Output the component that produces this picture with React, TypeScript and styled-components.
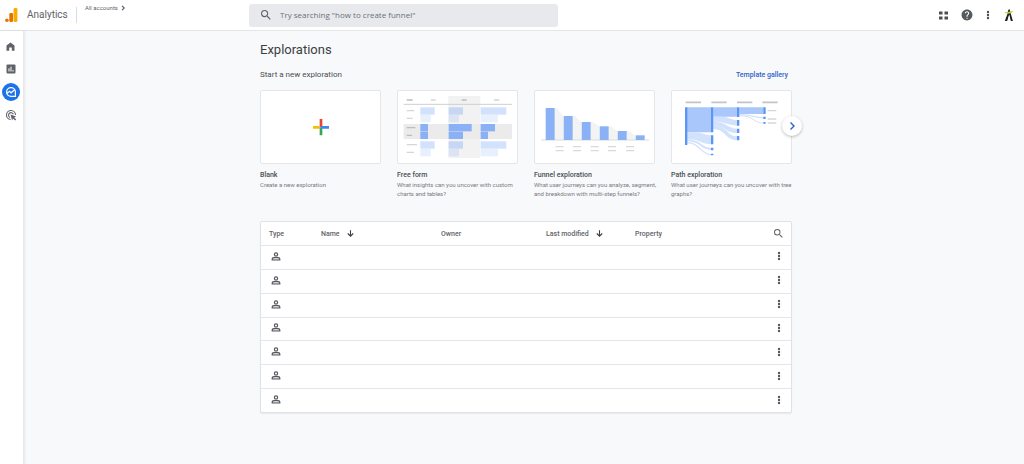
import React from "react";
import styled, { createGlobalStyle } from "styled-components";

const Global = createGlobalStyle`
  * { box-sizing: border-box; }
  html, body, #root { min-height: 100vh; }
  body { margin: 0; background: #f8f9fb; color: #3c4043; font-family: Roboto, sans-serif; font-size: 7px; }
  #root { display: flex; flex-direction: column; }
  button { border: 0; padding: 0; background: none; color: inherit; font: inherit; cursor: pointer; }
  h1, h2, h3, p { margin: 0; font-weight: 400; }
  svg { display: block; }
`;

const Header = styled.header`
  display: grid;
  grid-template-columns: 249px minmax(0, 309px) 1fr;
  align-items: center;
  height: 31px;
  background: #fff;
  border-bottom: 1px solid #e3e5e8;
`;

const Brand = styled.div`
  display: flex;
  align-items: center;
  height: 30px;
  padding-left: 5px;
`;

const BrandName = styled.span`
  width: 50px;
  height: 16px;
  margin-left: 9px;
  border-right: 1px solid #dadce0;
  color: #5f6368;
  font-size: 10px;
  line-height: 16px;
`;

const Account = styled.button`
  display: flex;
  align-items: center;
  align-self: flex-start;
  gap: 2px;
  margin: 4px 0 0 8px;
  color: #5f6368;
  font-size: 6px;
  line-height: 8px;
`;

const SearchBox = styled.label`
  display: flex;
  align-items: center;
  gap: 9px;
  height: 23px;
  padding-left: 12px;
  border-radius: 3px;
  background: #e8e9ed;
  color: #5f6368;
`;

const SearchInput = styled.input`
  flex: 1;
  min-width: 0;
  border: 0;
  padding: 0;
  outline: 0;
  background: transparent;
  color: #5f6368;
  font: 8px/12px "Open Sans", sans-serif;
  &::placeholder { color: #6c7075; opacity: 1; }
`;

const HeaderTools = styled.div`
  display: flex;
  justify-content: flex-end;
  align-items: center;
  gap: 13px;
  padding-right: 9px;
  color: #4b4f54;
`;

const ToolButton = styled.button`
  display: flex;
  align-items: center;
  justify-content: center;
`;

const Body = styled.div`
  display: flex;
  flex: 1;
`;

const Sidebar = styled.nav`
  display: flex;
  flex-direction: column;
  align-items: center;
  gap: 5px;
  flex: none;
  width: 24px;
  padding: 6px 2px 0 0;
  background: #fff;
  border-right: 1px solid #e6e8eb;
  box-shadow: 1px 0 2px rgba(60, 64, 67, 0.1);
`;

const NavLink = styled.a<{ $active?: boolean }>`
  display: flex;
  align-items: center;
  justify-content: center;
  width: 18px;
  height: 18px;
  border-radius: 50%;
  background: ${(p) => (p.$active ? "#1a73e8" : "transparent")};
  color: ${(p) => (p.$active ? "#fff" : "#5f6368")};
`;

const Main = styled.main`
  flex: 1;
  min-width: 0;
  padding: 9px 0 24px 4px;
`;

const Content = styled.div`
  width: 100%;
  max-width: 532px;
  margin: 0 auto;
`;

const Title = styled.h1`
  color: #3c4043;
  font-size: 13px;
  line-height: 20px;
`;

const SectionHead = styled.div`
  display: flex;
  justify-content: space-between;
  align-items: center;
  margin-top: 9px;
  padding-right: 4px;
  line-height: 12px;
`;

const SectionTitle = styled.h2`
  color: #4a4e52;
  font-size: 8px;
`;

const GalleryLink = styled.a`
  color: #2f62c9;
  font-size: 7px;
  font-weight: 500;
  text-decoration: none;
`;

const Templates = styled.div`
  position: relative;
  display: grid;
  grid-template-columns: repeat(4, minmax(0, 1fr));
  gap: 16px;
  margin-top: 9px;
`;

const Template = styled.button`
  display: block;
  align-self: start;
  text-align: left;
`;

const Thumb = styled.div`
  border: 1px solid #e4e6e9;
  border-radius: 2px;
  background: #fff;
  overflow: hidden;
  svg { width: 100%; height: 72px; }
`;

const TemplateName = styled.h3`
  margin-top: 6px;
  color: #4a4e52;
  font-size: 7px;
  font-weight: 500;
  line-height: 10px;
`;

const TemplateText = styled.p`
  color: #777b80;
  font-size: 6px;
  line-height: 9px;
  white-space: pre;
`;

const NextButton = styled.button`
  position: absolute;
  top: 26px;
  right: -10px;
  display: flex;
  align-items: center;
  justify-content: center;
  width: 20px;
  height: 20px;
  border-radius: 50%;
  background: #fff;
  color: #2f62c9;
  box-shadow: 0 1px 3px rgba(60, 64, 67, 0.35);
`;

const TableCard = styled.div`
  margin-top: 23px;
  border: 1px solid #e0e2e5;
  border-radius: 2px;
  background: #fff;
  box-shadow: 0 1px 1px rgba(60, 64, 67, 0.08);
`;

const Table = styled.table`
  width: 100%;
  height: 190px;
  table-layout: fixed;
  border-collapse: separate;
  border-spacing: 0;
`;

const HeadCell = styled.th<{ $width?: number }>`
  width: ${(p) => (p.$width ? `${p.$width}px` : "auto")};
  height: 23px;
  padding: 0 0 0 8px;
  color: #5f6368;
  font-size: 7px;
  font-weight: 500;
  text-align: left;
  vertical-align: middle;
`;

const SortButton = styled.button`
  display: flex;
  align-items: center;
  gap: 7px;
`;

const Cell = styled.td`
  height: 23px;
  padding: 0 0 2px 10px;
  border-top: 1px solid #e4e6e9;
  color: #55595e;
  vertical-align: middle;
`;

const RowAction = styled.button`
  display: flex;
  justify-content: center;
  width: 12px;
  margin: 0 6px 0 auto;
`;

const TableSearch = styled(RowAction)`
  margin-right: 7px;
`;

const Search = ({ size = 12 }: { size?: number }) => (
  <svg width={size} height={size} viewBox="3 3 18 18" fill="currentColor">
    <path d="M15.5 14h-.79l-.28-.27A6.47 6.47 0 0 0 16 9.5 6.5 6.5 0 1 0 9.500 16c1.610 0 3.090-.59 4.230-1.570l.27.28v.79l5 4.990L20.490 19l-4.990-5zm-6 0C7.010 14 5 11.990 5 9.500S7.010 5 9.500 5 14 7.010 14 9.500 11.990 14 9.500 14z" />
  </svg>
);

const Dots = () => (
  <svg width="4" height="10" viewBox="0 0 4 10" fill="currentColor">
    <circle cx="2" cy="2" r="1.200" />
    <circle cx="2" cy="5" r="1.200" />
    <circle cx="2" cy="8" r="1.200" />
  </svg>
);

const Chevron = ({ size, weight }: { size: number; weight: number }) => (
  <svg width={size} height={size} viewBox="0 0 10 10" fill="none" stroke="currentColor" strokeWidth={weight}>
    <path d="M3.500 1.500 7 5 3.500 8.500" />
  </svg>
);

const SortArrow = () => (
  <svg width="7" height="7" viewBox="0 0 7 7" fill="none" stroke="#3c4043" strokeWidth="1.100">
    <path d="M3.500 .3V6.200M.8 3.500l2.700 2.700 2.700-2.700" />
  </svg>
);

const Person = () => (
  <svg width="10" height="9" viewBox="0 0 10 9" fill="none" stroke="currentColor" strokeWidth="1.200">
    <circle cx="5" cy="2.400" r="1.600" />
    <path d="M1.200 8V7.200C1.200 6 3.300 5.400 5 5.400S8.800 6 8.800 7.200V8Z" fill="#dcdddf" />
  </svg>
);

const Logo = () => (
  <svg width="13" height="16" viewBox="0 0 13 16">
    <rect x="8.600" y="1" width="3.800" height="14" rx="1.300" fill="#f9ab00" />
    <rect x="4.300" y="6" width="3.800" height="9" rx="1.300" fill="#e37400" />
    <circle cx="1.900" cy="13.200" r="1.800" fill="#e37400" />
  </svg>
);

const Apps = () => (
  <svg width="9" height="9" viewBox="0 0 9 9" fill="currentColor">
    <path d="M0 .5h3.500v3H0zM5.500 .5H9v3H5.500zM0 5.500h3.500v3H0zM5.500 5.500H9v3H5.500z" />
  </svg>
);

const Help = () => (
  <svg width="12" height="12" viewBox="1 1 22 22" fill="#55595e">
    <path d="M12 2C6.480 2 2 6.480 2 12s4.480 10 10 10 10-4.480 10-10S17.520 2 12 2zm1 17h-2v-2h2v2zm2.070-7.750-.9.920C13.450 12.900 13 13.500 13 15h-2v-.5c0-1.100.45-2.100 1.170-2.830l1.240-1.260c.37-.36.590-.86.590-1.410 0-1.100-.9-2-2-2s-2 .9-2 2H8c0-2.210 1.790-4 4-4s4 1.790 4 4c0 .88-.36 1.680-.93 2.250z" />
  </svg>
);

const Avatar = () => (
  <svg width="12" height="14" viewBox="0 0 12 14">
    <path d="M5 2.800 6.200.8 7 2.800 8.200 7l1.700 6H7.800L6.300 7 4.200 13H1.800L4.400 6z" fill="#202124" />
    <path d="M1.200 4.200 4.500 4 10.500 3 8 5.200 4.200 5.800z" fill="#b5d334" />
    <path d="M6.100 6.500 4.600 13h2.600z" fill="#fff" />
  </svg>
);

const Home = () => (
  <svg width="9" height="9" viewBox="0 0 9 9">
    <path d="M.5 3.400 4.500 .4l4 3V8.700H5.800V5.500H3.200V8.700H.5z" fill="currentColor" />
  </svg>
);

const Reports = () => (
  <svg width="10" height="10" viewBox="0 0 10 10">
    <rect x=".5" y=".5" width="9" height="9" rx="1" fill="currentColor" />
    <path d="M3 7.500V4.300M5 7.500V2.700M7 7.500V6" stroke="#fff" />
  </svg>
);

const Explore = () => (
  <svg width="12" height="12" viewBox="0 0 12 12" fill="none" stroke="currentColor" strokeWidth="1.200">
    <path d="M10.400 10.400H6A4.400 4.400 0 1 1 10.400 6Z" />
    <path d="M2 7.200 4.600 5.200 6 6.800 9.600 3.800" />
  </svg>
);

const Advertising = () => (
  <svg width="12" height="12" viewBox="0 0 12 12" fill="none" stroke="currentColor" strokeWidth="1.100">
    <path d="M5.600 10.500A4.500 4.500 0 1 1 10.500 6" />
    <path d="M5 8.400A2.500 2.500 0 1 1 8.400 5.300" />
    <path d="m5.500 5.500 5.700 1.900-2 1 2 2.200-1 1-2.200-2-.9 1.800z" fill="currentColor" stroke="none" />
  </svg>
);

const BlankArt = () => (
  <svg viewBox="33 18 357 216">
    <path d="M209 102h8v24h-8z" fill="#ea4335" />
    <path d="M189 123h20v8h-20z" fill="#fbbc04" />
    <path d="M209 127h8v24h-8z" fill="#34a853" />
    <path d="M213 123h24v8h-24z" fill="#4285f4" />
  </svg>
);

const freeRows = [
  { y: 67, tones: ["#d2e1fc", "#c6d6f3", "#d2e1fc"], widths: [43, 43, 77] },
  { y: 90, tones: ["#e8f0fe", "#dce4f3", "#e8f0fe"], widths: [31, 31, 52] },
  { y: 117, tones: ["#8ab0f5", "#8ab0f5", "#8ab0f5"], widths: [23, 69, 43] },
  { y: 140, tones: ["#8ab0f5", "#8ab0f5", "#8ab0f5"], widths: [23, 43, 22] },
  { y: 169, tones: ["#d2e1fc", "#c6d6f3", "#d2e1fc"], widths: [43, 43, 77] },
  { y: 192, tones: ["#e8f0fe", "#dce4f3", "#e8f0fe"], widths: [31, 31, 52] },
];

const FreeFormArt = () => (
  <svg viewBox="24 18 357 216">
    <path d="M175 33h96v186h-96z" fill="#f2f2f2" />
    <path d="M41 117h325v45H41z" fill="#ebebeb" />
    <path d="M41 58h325" stroke="#cfcfcf" strokeWidth="3" />
    <path d="M50 45h18M215 45h15M50 128h26M50 151h16" stroke="#bdbdbd" strokeWidth="4" />
    <path d="M123 45h14M312 45h16M50 77h23M50 100h18M50 179h31M50 202h22" stroke="#d6d6d6" strokeWidth="4" />
    {freeRows.map((row) =>
      [91, 176, 272].map((x, i) => (
        <rect key={`${row.y}-${x}`} x={x} y={row.y} width={row.widths[i]} height="22" fill={row.tones[i]} />
      ))
    )}
  </svg>
);

const funnelTops = [69, 93, 111, 124, 138, 151];

const FunnelArt = () => (
  <svg viewBox="30 18 357 216">
    {funnelTops.slice(0, 5).map((top, i) => (
      <path key={top} d={`M${89 + i * 54} ${top}h7l18 ${funnelTops[i + 1] - top}V165h-25z`} fill="#f3f3f3" />
    ))}
    <path d="M48 165h324" stroke="#dcdcdc" strokeWidth="3" />
    {funnelTops.map((top, i) => (
      <rect key={top} x={62 + i * 54} y={top} width="27" height={165 - top} fill="#8ab0f5" />
    ))}
    {[92, 144, 197, 249, 303].map((x) => (
      <path key={x} d={`M${x} 185h24M${x} 197h24`} stroke="#d9d9d9" strokeWidth="4" />
    ))}
  </svg>
);

const PathArt = () => (
  <svg viewBox="36 93 357 216">
    <path d="M77 127h46M154 127h46M231 127h46M307 127h46" stroke="#c4c4c4" strokeWidth="5" />
    <path d="M81 142h73v75H81zM160 142h72v28h-72zM238 142h73v20h-73z" fill="#a9c7fa" />
    <g fill="#d2e1fc">
      <path d="M81 217h25c22 0 25 9 48 9v27c-28 0-35-16-73-16z" />
      <path d="M160 170h25c22 0 25 10 47 10v17c-26 0-30-11-72-11z" />
      <path d="M160 186c42 0 42 20 72 20v13c-36 0-36-22-72-22z" />
      <path d="M160 197c42 0 42 32 72 32v12c-36 0-36-34-72-34z" />
    </g>
    <g fill="none" stroke="#d2e1fc">
      <path d="M81 241c45 0 40 26 73 26" strokeWidth="6" />
      <path d="M81 248c40 0 40 36 73 36M238 164c45 0 40 9 73 9" strokeWidth="4" />
      <path d="M238 167c45 0 40 22 73 22" strokeWidth="3" />
    </g>
    <g fill="#5b96f7">
      <path d="M75 142h7v113h-7zM153 142h7v75h-7zM153 226h7v27h-7zM153 263h7v8h-7zM153 281h7v5h-7z" />
      <path d="M231 142h7v29h-7zM231 180h7v17h-7zM231 206h7v13h-7zM231 228h7v13h-7z" />
      <path d="M310 142h7v20h-7zM310 170h7v7h-7zM310 186h7v5h-7z" />
    </g>
    <path d="M323 152h26M323 177h26M323 189h26" stroke="#d6d6d6" strokeWidth="4" />
  </svg>
);

const templates = [
  { name: "Blank", text: "Create a new exploration", art: <BlankArt /> },
  { name: "Free form", text: "What insights can you uncover with custom\ncharts and tables?", art: <FreeFormArt /> },
  { name: "Funnel exploration", text: "What user journeys can you analyze, segment,\nand breakdown with multi-step funnels?", art: <FunnelArt /> },
  { name: "Path exploration", text: "What user journeys can you uncover with tree\ngraphs?", art: <PathArt /> },
];

const navItems = [
  { label: "Home", icon: <Home /> },
  { label: "Reports", icon: <Reports /> },
  { label: "Explore", icon: <Explore />, active: true },
  { label: "Advertising", icon: <Advertising /> },
];

const rows = [1, 2, 3, 4, 5, 6, 7];

export default function App() {
  return (
    <>
      <Global />
      <Header>
        <Brand>
          <Logo />
          <BrandName>Analytics</BrandName>
          <Account type="button">
            All accounts <Chevron size={6} weight={2} />
          </Account>
        </Brand>
        <SearchBox>
          <Search size={10} />
          <SearchInput type="search" aria-label="Search" placeholder={'Try searching "how to create funnel"'} />
        </SearchBox>
        <HeaderTools>
          <ToolButton type="button" aria-label="Apps"><Apps /></ToolButton>
          <ToolButton type="button" aria-label="Help"><Help /></ToolButton>
          <ToolButton type="button" aria-label="More"><Dots /></ToolButton>
          <ToolButton type="button" aria-label="Account"><Avatar /></ToolButton>
        </HeaderTools>
      </Header>
      <Body>
        <Sidebar aria-label="Main">
          {navItems.map((item) => (
            <NavLink key={item.label} href="#" aria-label={item.label} $active={item.active}>
              {item.icon}
            </NavLink>
          ))}
        </Sidebar>
        <Main>
          <Content>
            <Title>Explorations</Title>
            <SectionHead>
              <SectionTitle>Start a new exploration</SectionTitle>
              <GalleryLink href="#">Template gallery</GalleryLink>
            </SectionHead>
            <Templates>
              {templates.map((t) => (
                <Template key={t.name} type="button">
                  <Thumb>{t.art}</Thumb>
                  <TemplateName>{t.name}</TemplateName>
                  <TemplateText>{t.text}</TemplateText>
                </Template>
              ))}
              <NextButton type="button" aria-label="Next templates">
                <Chevron size={10} weight={1.4} />
              </NextButton>
            </Templates>
            <TableCard>
              <Table>
                <thead>
                  <tr>
                    <HeadCell $width={52}>Type</HeadCell>
                    <HeadCell $width={120}>
                      <SortButton type="button">Name <SortArrow /></SortButton>
                    </HeadCell>
                    <HeadCell $width={105}>Owner</HeadCell>
                    <HeadCell $width={89}>
                      <SortButton type="button">Last modified <SortArrow /></SortButton>
                    </HeadCell>
                    <HeadCell>Property</HeadCell>
                    <HeadCell $width={40}>
                      <TableSearch type="button" aria-label="Search explorations"><Search size={9} /></TableSearch>
                    </HeadCell>
                  </tr>
                </thead>
                <tbody>
                  {rows.map((row) => (
                    <tr key={row}>
                      <Cell><Person /></Cell>
                      <Cell />
                      <Cell />
                      <Cell />
                      <Cell />
                      <Cell>
                        <RowAction type="button" aria-label="Row options"><Dots /></RowAction>
                      </Cell>
                    </tr>
                  ))}
                </tbody>
              </Table>
            </TableCard>
          </Content>
        </Main>
      </Body>
    </>
  );
}
